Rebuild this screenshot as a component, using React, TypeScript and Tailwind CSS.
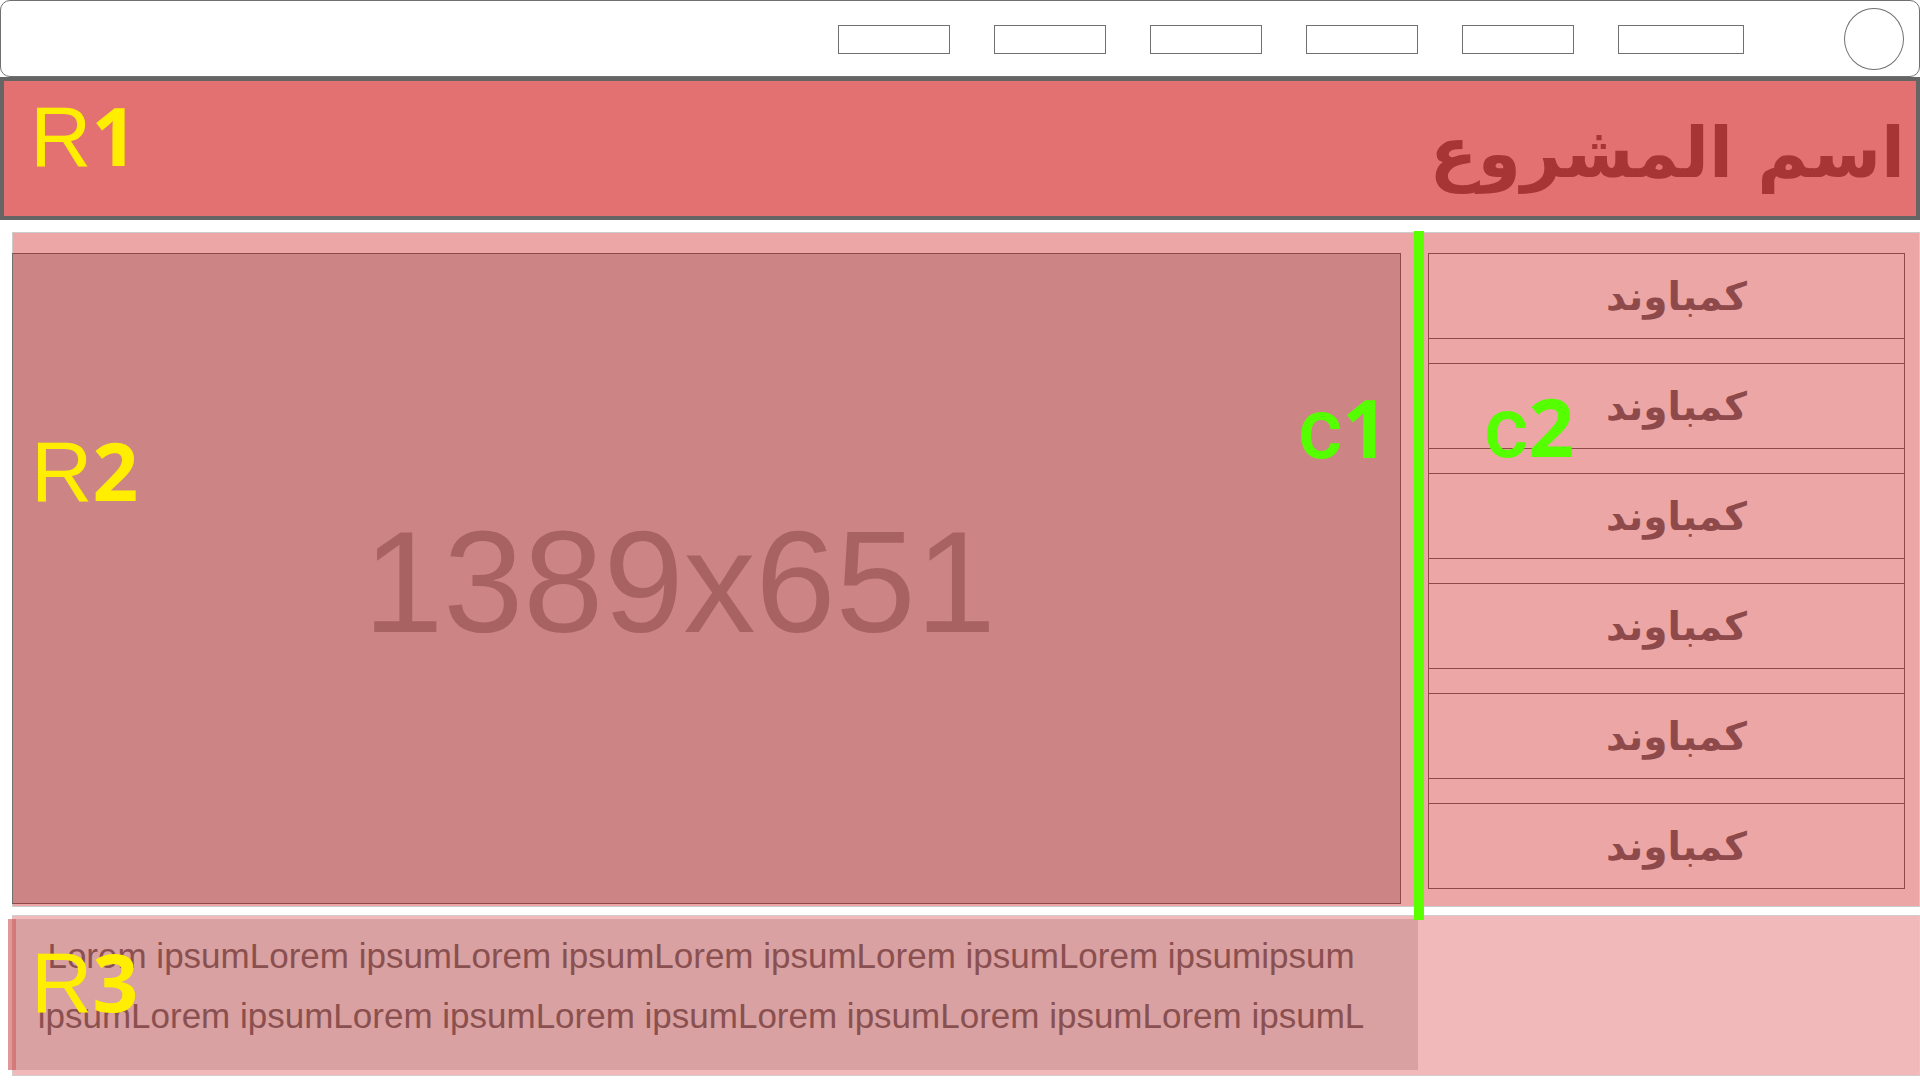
import type { ReactNode } from "react";

const navItems = ["w-28", "w-28", "w-28", "w-28", "w-28", "w-[126px]"];
const compounds = [1, 2, 3, 4, 5, 6];

function Tag({ letter, digit, className }: { letter: string; digit: string; className: string }) {
  return (
    <span
      className={`pointer-events-none absolute z-20 flex items-baseline text-[85px] leading-none whitespace-nowrap ${className}`}
    >
      {letter}
      <b className="font-['Open_Sans',sans-serif] text-[80px] leading-none font-bold">{digit}</b>
    </span>
  );
}

function Panel({ className, children }: { className: string; children: ReactNode }) {
  return <section className={`relative ml-3 border ${className}`}>{children}</section>;
}

export default function App() {
  return (
    <div className="min-h-screen bg-white font-['Liberation_Sans',sans-serif]">
      <header className="flex h-[77px] items-center rounded-[10px] border border-[#707070] pr-[15px]">
        <nav className="ml-auto flex items-center gap-11 pt-0.5" aria-label="Main">
          {navItems.map((size, i) => (
            <a key={i} href="#" aria-label={`Link ${i + 1}`} className={`h-[29px] border border-[#707070] ${size}`} />
          ))}
        </nav>
        <button aria-label="Profile" className="ml-[100px] h-[62px] w-[60px] rounded-[50%] border border-[#707070]" />
      </header>

      <div className="relative flex h-[143px] items-center justify-end border-4 border-[#656565] bg-[#e37171] pt-2 pr-[11px]">
        <Tag letter="R" digit="1" className="top-[13px] left-[26px] text-[#ffee00]" />
        <h1 dir="rtl" lang="ar" className="font-['DejaVu_Sans',sans-serif] text-[70px] leading-[96px] font-bold text-[#a83535]">
          اسم المشروع
        </h1>
      </div>

      <Panel className="z-10 mt-3 flex border-[#cccccc] bg-[#eca6a6] pt-5 pr-[14px] pb-0.5">
        <div className="relative -ml-px flex min-h-[651px] flex-1 items-center justify-center border border-[#8e4a4a] border-l-[#707070] bg-[#cc8484] pt-2 pr-[54px]">
          <p className="text-[144px] leading-none text-[#a96262]">1389x651</p>
          <Tag letter="R" digit="2" className="top-[175px] left-[18px] text-[#ffee00]" />
          <Tag letter="c" digit="1" className="top-[133px] right-3 font-['Roboto',sans-serif] font-medium text-[#55ff00]" />
        </div>
        <div className="absolute -top-0.5 right-[495px] -bottom-[14px] w-2.5 bg-[#5aff00]" />
        <div className="relative ml-[27px] w-[477px]">
          <ul className="flex flex-col gap-6 border-x border-[#8e4a4a]">
            {compounds.map((n) => (
              <li
                key={n}
                dir="rtl"
                lang="ar"
                className="flex h-[86px] items-center justify-center border-y border-[#8e4a4a] pl-5 font-['DejaVu_Sans',sans-serif] text-[39px] leading-none font-bold text-[#8e4a4a]"
              >
                كمباوند
              </li>
            ))}
          </ul>
          <Tag letter="c" digit="2" className="top-[133px] left-14 font-['Roboto',sans-serif] font-medium text-[#55ff00]" />
        </div>
      </Panel>

      <Panel className="mt-2 border-[#d4cccc] bg-[#f1b9b9] pt-[3px] pr-[501px] pb-[5px] pl-[3px]">
        <div className="flex min-h-[151px] items-start justify-center bg-[#d9a1a1] pt-[7px] pr-8">
          <p className="text-center text-[35px] leading-[60px] text-[#8a5050]">
            Lorem ipsumLorem ipsumLorem ipsumLorem ipsumLorem ipsumLorem ipsumipsum
            <br />
            ipsumLorem ipsumLorem ipsumLorem ipsumLorem ipsumLorem ipsumLorem ipsumL
          </p>
        </div>
        <div className="absolute top-[3px] bottom-[5px] -left-[5px] w-2 bg-[#c83232]/50" />
        <Tag letter="R" digit="3" className="top-6 left-[18px] text-[#ffee00]" />
      </Panel>
    </div>
  );
}
